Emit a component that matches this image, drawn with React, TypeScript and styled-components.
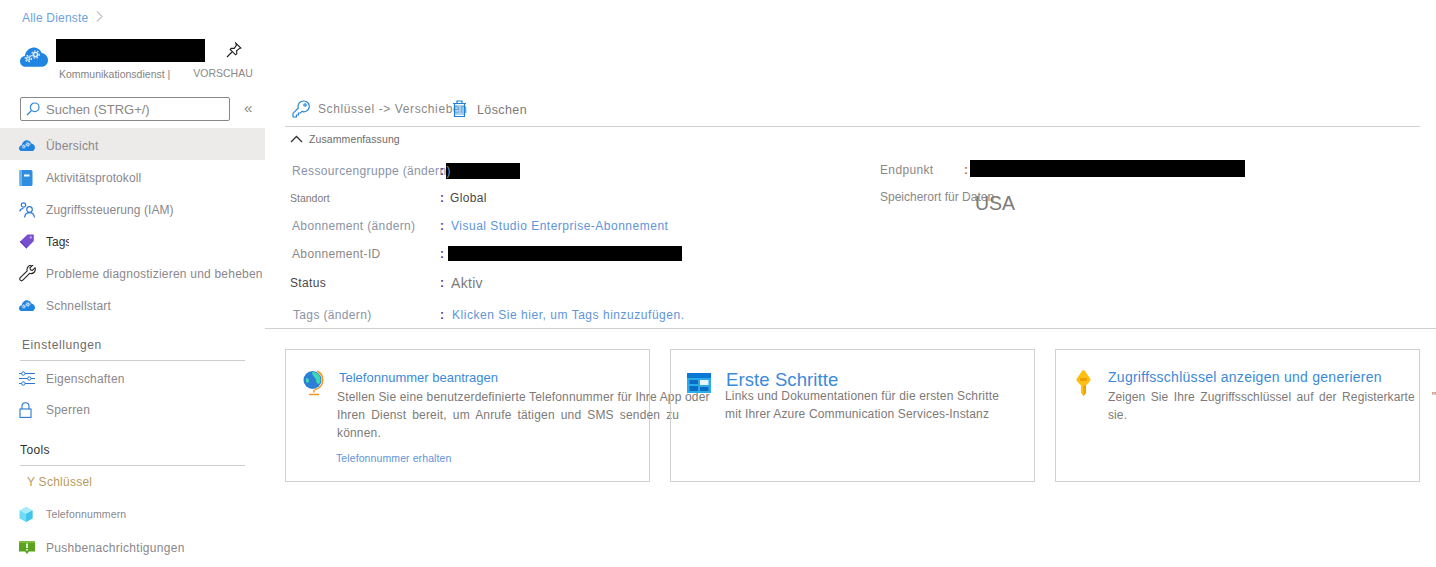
import React from "react";
import styled, { createGlobalStyle } from "styled-components";

const Global = createGlobalStyle`
  html, body { margin: 0; padding: 0; background: #fff; overflow: hidden; }
  body { font-family: "Liberation Sans", Arial, sans-serif; }
  * { box-sizing: border-box; }
`;

const Page = styled.div`
  display: flex;
  width: 1436px;
  height: 567px;
  overflow: hidden;
`;

const Sidebar = styled.aside`
  width: 265px;
  flex: none;
  display: flex;
  flex-direction: column;
`;

const Crumbs = styled.div`
  height: 39px;
  padding: 11px 0 0 22px;
  display: flex;
  align-items: flex-start;
  gap: 8px;
  font-size: 12px;
  line-height: 15px;
  letter-spacing: 0.2px;
  color: #6ba3e0;
`;

const Resource = styled.div`
  height: 58px;
  display: grid;
  grid-template-columns: 36px 149px 21px auto;
  grid-template-rows: 23px 35px;
  padding-left: 20px;
`;

const ResourceIcon = styled.div`
  grid-row: 1 / 3;
  padding-top: 8px;
`;

const Redaction = styled.div<{ $w: number; $h: number; $x?: number; $y?: number }>`
  width: ${(p) => p.$w}px;
  height: ${(p) => p.$h}px;
  margin-left: ${(p) => p.$x ?? 0}px;
  margin-top: ${(p) => p.$y ?? 0}px;
  background: #000;
  flex: none;
`;

const PinSlot = styled.div`
  grid-column: 4;
  padding-top: 3px;
`;

const SubLine = styled.div`
  grid-column: 2 / 5;
  display: flex;
  align-items: flex-start;
  padding: 6px 0 0 3px;
  white-space: nowrap;
  font-size: 10.5px;
  line-height: 13px;
  color: #85827f;
`;

const Preview = styled.span`
  margin-left: 23px;
  margin-top: -1px;
  font-size: 10.5px;
  color: #8a8886;
`;

const SearchRow = styled.div`
  height: 31px;
  padding-left: 20px;
  display: flex;
  align-items: flex-start;
`;

const SearchBox = styled.div`
  width: 210px;
  height: 24px;
  border: 1px solid #8a8886;
  border-radius: 2px;
  display: flex;
  align-items: center;
  padding-left: 5px;
  gap: 6px;
  font-size: 13px;
  color: #8a8886;
`;

const Collapse = styled.span`
  margin-left: 14px;
  font-size: 15px;
  line-height: 22px;
  color: #8a8886;
`;

const NavRow = styled.div<{ $active?: boolean; $h?: number }>`
  height: ${(p) => p.$h ?? 32}px;
  padding-top: 3px;
  display: flex;
  align-items: center;
  background: ${(p) => (p.$active ? "#edebe9" : "transparent")};
  white-space: nowrap;
`;

const NavIcon = styled.span`
  width: 46px;
  padding-left: 19px;
  flex: none;
  display: flex;
  align-items: center;
`;

const NavLabel = styled.span<{ $size?: number; $color?: string; $clip?: number; $spacing?: number }>`
  font-size: ${(p) => p.$size ?? 12}px;
  letter-spacing: ${(p) => p.$spacing ?? 0.2}px;
  color: ${(p) => p.$color ?? "#8a878c"};
  ${(p) => (p.$clip ? `display:inline-block;width:${p.$clip}px;overflow:hidden;` : "")}
`;

const KeyLabel = styled.span`
  padding-left: 27px;
  font-size: 12px;
  letter-spacing: 0.25px;
  color: #b89b5e;
`;

const SectionTitle = styled.div<{ $dark?: boolean; $top: number }>`
  margin: ${(p) => p.$top}px 0 0 ${(p) => (p.$dark ? 20 : 22)}px;
  font-size: 12px;
  line-height: 15px;
  height: 24px;
  letter-spacing: ${(p) => (p.$dark ? 0.4 : 0.6)}px;
  color: ${(p) => (p.$dark ? "#323130" : "#6e6c6a")};
`;

const Rule = styled.div`
  margin-left: 20px;
  width: 225px;
  height: 1px;
  background: #cfcdcb;
  margin-top: -2px;
`;

const Main = styled.main`
  flex: 1;
  min-width: 0;
  padding-top: 97px;
  display: flex;
  flex-direction: column;
`;

const Toolbar = styled.div`
  height: 30px;
  margin-left: 20px;
  width: 1135px;
  border-bottom: 1px solid #d2d0ce;
  display: flex;
  align-items: flex-start;
  padding: 3px 0 0 7px;
  white-space: nowrap;
`;

const ToolText = styled.span`
  font-size: 12px;
  letter-spacing: 0.6px;
  line-height: 15px;
  margin: 2px 0 0 8px;
  color: #8a8886;
  width: 134px;
`;

const DeleteText = styled.span`
  font-size: 12.5px;
  letter-spacing: 0.4px;
  line-height: 15px;
  margin: 3px 0 0 10px;
  color: #7d7a78;
`;

const Summary = styled.div`
  height: 20px;
  padding: 4px 0 0 25px;
  display: flex;
  align-items: center;
  gap: 6px;
  font-size: 10.5px;
  line-height: 13px;
  letter-spacing: 0.1px;
  color: #6e6c6a;
`;

const Facts = styled.div`
  height: 182px;
  padding-top: 6px;
  border-bottom: 1px solid #d2d0ce;
  display: grid;
  grid-template-columns: 615px 1fr;
`;

const FactCol = styled.div`
  display: flex;
  flex-direction: column;
`;

const FactRow = styled.div<{ $h: number; $cols?: number; $pad?: number; $colon?: number }>`
  height: ${(p) => p.$h}px;
  display: grid;
  grid-template-columns: ${(p) => p.$cols ?? 150}px ${(p) => p.$colon ?? 8}px 1fr;
  align-items: center;
  padding-left: ${(p) => p.$pad ?? 25}px;
  white-space: nowrap;
`;

const FactLabel = styled.span<{ $tone?: string; $small?: boolean }>`
  position: relative;
  z-index: 1;
  font-size: ${(p) => (p.$small ? 10.5 : 12)}px;
  letter-spacing: ${(p) => (p.$small ? 0 : 0.35)}px;
  color: ${(p) => p.$tone ?? "#8a93a6"};
`;

const WideLabel = styled.span`
  align-self: start;
  margin-top: 2px;
  font-size: 12px;
  line-height: 16px;
  color: #8a8886;
`;

const Colon = styled.span<{ $color?: string }>`
  position: relative;
  z-index: 1;
  font-size: 12px;
  font-weight: 700;
  color: ${(p) => p.$color ?? "#6b3a8e"};
`;

const FactValue = styled.span<{ $link?: boolean; $x?: number; $size?: number; $tone?: string; $spacing?: number }>`
  font-size: ${(p) => p.$size ?? 12}px;
  letter-spacing: ${(p) => p.$spacing ?? 0.3}px;
  margin-left: ${(p) => p.$x ?? 0}px;
  color: ${(p) => (p.$link ? "#5e94da" : p.$tone ?? "#4a4846")};
`;

const UsaValue = styled.span`
  align-self: start;
  font-size: 19.5px;
  line-height: 23px;
  margin-left: 1px;
  margin-top: 5px;
  color: #7d7a78;
`;

const Cards = styled.div`
  margin: 20px 0 0 20px;
  display: grid;
  grid-template-columns: repeat(3, 365px);
  column-gap: 20px;
`;

const Card = styled.section`
  height: 133px;
  border: 1px solid #d2d0ce;
  display: flex;
  white-space: nowrap;
`;

const CardIcon = styled.div<{ $w: number; $left: number; $y: number }>`
  flex: none;
  width: ${(p) => p.$w}px;
  padding: ${(p) => p.$y}px 0 0 ${(p) => p.$left}px;
`;

const CardBody = styled.div<{ $top: number }>`
  padding-top: ${(p) => p.$top}px;
`;

const CardTitle = styled.div<{ $size?: number; $lh?: number; $spacing?: number }>`
  font-size: ${(p) => p.$size ?? 13}px;
  line-height: ${(p) => p.$lh ?? 16}px;
  letter-spacing: ${(p) => p.$spacing ?? 0}px;
  color: #3b8ad9;
`;

const CardText = styled.div<{ $x?: number; $top?: number; $lh?: number; $size?: number; $spacing?: number }>`
  margin: ${(p) => p.$top ?? 0}px 0 0 ${(p) => p.$x ?? 0}px;
  font-size: ${(p) => p.$size ?? 12}px;
  line-height: ${(p) => p.$lh ?? 18}px;
  letter-spacing: ${(p) => p.$spacing ?? 0.3}px;
  color: #7d7a78;
`;

const WideLine = styled.span<{ $word: number }>`
  word-spacing: ${(p) => p.$word}px;
`;

const ClippedTail = styled.span`
  margin-left: 17px;
`;

const CardLink = styled.div`
  margin: 9px 0 0 -3px;
  font-size: 10.5px;
  line-height: 14px;
  letter-spacing: 0.1px;
  color: #5e94da;
`;

const CloudGears = ({ s = 28 }: { s?: number }) => {
  const gear = (cx: number, cy: number, r: number) => (
    <g>
      <circle cx={cx} cy={cy} r={r + 0.9} fill="none" stroke="#eaf3fb" strokeWidth="1.200" strokeDasharray="1.600 1.500" />
      <circle cx={cx} cy={cy} r={r} fill="#eaf3fb" />
      <circle cx={cx} cy={cy} r={r * 0.5} fill="#3f8fdc" />
    </g>
  );
  return (
    <svg width={s} height={(s * 20) / 28} viewBox="0 0 28 20">
      <path d="M6 19.800C2.500 19.800 0 17.400 0 14.400 0 11.500 2 9.300 4.800 9 5.400 4.200 9.200.5 13.800.5c3.600 0 6.700 2.300 7.900 5.600 3.500.5 6.300 3.600 6.300 7.100 0 3.700-2.900 6.600-6.400 6.600z" fill="#1f84e2" />
      {gear(15.500, 7.500, 2.800)}
      {gear(8.300, 11.500, 2.200)}
    </svg>
  );
};

const Pin = () => (
  <svg width="16" height="16" viewBox="0 0 16 16" fill="none" stroke="#1f1e1d" strokeWidth="1.100">
    <path d="M9.800 1.200l5 4.800-1.200.4-3 2.400.2 3-1.200 1L4.200 7.400l1-1.100 3 .1 2.200-3.100z" />
    <path d="M6 10L1 15" />
  </svg>
);

const SearchGlass = () => (
  <svg width="14" height="14" viewBox="0 0 14 14" fill="none" stroke="#2b88d8" strokeWidth="1.200">
    <circle cx="8.700" cy="5.300" r="4.300" />
    <path d="M5.500 8.500L1 13" />
  </svg>
);

const Book = () => (
  <svg width="14" height="16" viewBox="0 0 14 16">
    <rect x="0.500" y="0" width="13" height="16" rx="1.500" fill="#2f8ee0" />
    <rect x="0.500" y="0" width="2.500" height="16" fill="#69b4ee" />
    <rect x="5" y="4.500" width="5.500" height="2" fill="#fff" />
  </svg>
);

const People = () => (
  <svg width="18" height="16" viewBox="0 0 18 16" fill="none" stroke="#2a76d2" strokeWidth="1.200">
    <circle cx="4.500" cy="3" r="2.200" />
    <path d="M0.700 9.500c.4-2 2-3 3.800-3" />
    <circle cx="10.500" cy="7.500" r="2.800" />
    <path d="M5.500 15.500c.4-3 2.500-4.800 5-4.800s4.600 1.800 5 4.800" />
  </svg>
);

const Tag = () => (
  <svg width="15" height="15" viewBox="0 0 15 15">
    <path d="M8.500 0.500H14a.8.800 0 0 1 .8.800V7L7.500 14.500.8 7.800z" fill="#7a4fcf" />
    <path d="M0.800 7.800L7.500 14.500 8 14 1.500 7z" fill="#5f3ab0" />
    <circle cx="11.800" cy="3.400" r="1.100" fill="#c9b5f0" />
  </svg>
);

const Wrench = () => (
  <svg width="17" height="17" viewBox="0 0 17 17" fill="none" stroke="#252423" strokeWidth="1.100">
    <path d="M16 2.800l-2.600 2.500-2-.5-.5-2L13.500.5a4.200 4.200 0 0 0-5.300 5.300L1.300 12.700a1.900 1.900 0 0 0 0 2.500c.7.700 1.800.7 2.500 0l6.900-6.900A4.200 4.200 0 0 0 16 2.800z" />
  </svg>
);

const Sliders = () => (
  <svg width="16" height="15" viewBox="0 0 16 15" fill="none" stroke="#2a76d2" strokeWidth="1">
    <path d="M0 2.500h2.500M6 2.500h10M0 7.500h8.500M12 7.500h4M0 12.500h2.500M6 12.500h10" />
    <circle cx="4.300" cy="2.500" r="1.700" />
    <circle cx="10.300" cy="7.500" r="1.700" />
    <circle cx="4.300" cy="12.500" r="1.700" />
  </svg>
);

const Lock = () => (
  <svg width="13" height="16" viewBox="0 0 13 16" fill="none" stroke="#2a76d2" strokeWidth="1.100">
    <rect x="1" y="7" width="11" height="8.400" />
    <path d="M3 7V4.200a3.500 3.500 0 0 1 7 0V7" />
  </svg>
);

const Cube = () => (
  <svg width="14" height="15" viewBox="0 0 14 15">
    <path d="M7 0l6.500 3.500v8L7 15 .5 11.500v-8z" fill="#6fdcf5" />
    <path d="M.5 3.500L7 7l6.500-3.500L7 0z" fill="#a8ecfa" />
    <path d="M7 7v8l6.500-3.500v-8z" fill="#42c4ea" />
  </svg>
);

const Notify = () => (
  <svg width="16" height="15" viewBox="0 0 16 15">
    <path d="M0 0h16v10.500h-6L8 13l-2-2.500H0z" fill="#5ba31e" />
    <rect y="0" width="16" height="2" fill="#7cbe3c" />
    <rect x="7.200" y="2.500" width="1.600" height="4.500" fill="#fff" />
    <rect x="7.200" y="8" width="1.600" height="1.500" fill="#fff" />
  </svg>
);

const KeyOutline = () => (
  <svg width="18" height="18" viewBox="0 0 18 18" fill="none" stroke="#2b88d8" strokeWidth="1.200">
    <path d="M11.500 1a5.400 5.400 0 0 0-5.200 7L1 13.400V17h3.400v-2h2v-2h2l1.500-1.600A5.400 5.400 0 1 0 11.500 1z" />
    <circle cx="13" cy="5" r="1.200" />
  </svg>
);

const Trash = () => (
  <svg width="15" height="17" viewBox="0 0 15 17">
    <rect x="3" y="5" width="9" height="10" fill="#6bb2ea" fillOpacity="0.6" />
    <path d="M1 3.500h13M5 3.500V1h5v2.500M2.500 3.500v13h10v-13" fill="none" stroke="#1f7fd6" strokeWidth="1.200" />
  </svg>
);

const Chevron = () => (
  <svg width="13" height="8" viewBox="0 0 13 8" fill="none" stroke="#323130" strokeWidth="1.300">
    <path d="M1 7l5.500-5.500L12 7" />
  </svg>
);

const ChevronRight = () => (
  <svg width="7" height="11" viewBox="0 0 7 11" fill="none" stroke="#8a8886" strokeWidth="0.900">
    <path d="M1 .5l5 5-5 5" />
  </svg>
);

const Globe = () => (
  <svg width="22" height="26" viewBox="0 0 22 26">
    <circle cx="9.500" cy="10" r="9" fill="#2c7fd6" />
    <path d="M9 2c3 0 5 1 7 3 2 3 2 7 0 9-2 0-3-2-3-4S9 6 9 2zM3 8c2 0 3 1 3 3s-1 2-3 1z" fill="#3fd8b4" />
    <path d="M14 1c5 2 7 8 5 13-1.500 3-4 5-7.500 5.500" fill="none" stroke="#f7941d" strokeWidth="1.500" />
    <path d="M11 20v2.500M6 24.500h10" stroke="#f7941d" strokeWidth="1.500" />
  </svg>
);

const Dashboard = () => (
  <svg width="24" height="20" viewBox="0 0 24 20">
    <rect width="24" height="20" fill="#2dabe8" />
    <rect width="24" height="5" fill="#0a78d4" />
    <rect x="2.500" y="7" width="8.500" height="4" fill="#0a6cc4" />
    <rect x="13" y="7" width="8.500" height="5" fill="#e8f6ff" />
    <rect x="2.500" y="13" width="8.500" height="5" fill="#0a6cc4" />
    <rect x="13" y="14" width="8.500" height="4" fill="#0a6cc4" />
  </svg>
);

const GoldKey = () => (
  <svg width="17" height="26" viewBox="0 0 17 26">
    <path d="M8.500 0c1 0 1.500 1 2 1.800l4.500 6.400c.8 1.200.8 2 0 3.100L11 15.500V23l-2.500 3L6 23v-7.500l-4-4.200c-.8-1.100-.8-1.900 0-3.100l4.500-6.400C7 1 7.500 0 8.500 0z" fill="#fdc013" />
    <rect x="5" y="8" width="7" height="3" fill="#eda000" />
    <path d="M8.500 15.500H11V23l-2.500 3z" fill="#eda000" />
  </svg>
);

export default function App() {
  return (
    <Page>
      <Global />
      <Sidebar>
        <Crumbs>
          Alle Dienste <ChevronRight />
        </Crumbs>
        <Resource>
          <ResourceIcon>
            <CloudGears />
          </ResourceIcon>
          <Redaction $w={149} $h={23} />
          <span />
          <PinSlot>
            <Pin />
          </PinSlot>
          <SubLine>
            Kommunikationsdienst |<Preview>VORSCHAU</Preview>
          </SubLine>
        </Resource>
        <SearchRow>
          <SearchBox>
            <SearchGlass />
            Suchen (STRG+/)
          </SearchBox>
          <Collapse>«</Collapse>
        </SearchRow>
        <NavRow $active>
          <NavIcon><CloudGears s={16} /></NavIcon>
          <NavLabel>Übersicht</NavLabel>
        </NavRow>
        <NavRow>
          <NavIcon><Book /></NavIcon>
          <NavLabel $spacing={0.1}>Aktivitätsprotokoll</NavLabel>
        </NavRow>
        <NavRow>
          <NavIcon><People /></NavIcon>
          <NavLabel $spacing={0.08}>Zugriffssteuerung (IAM)</NavLabel>
        </NavRow>
        <NavRow>
          <NavIcon><Tag /></NavIcon>
          <NavLabel $color="#323130" $clip={23} $spacing={0}>Tags</NavLabel>
        </NavRow>
        <NavRow>
          <NavIcon><Wrench /></NavIcon>
          <NavLabel $spacing={0.22}>Probleme diagnostizieren und beheben</NavLabel>
        </NavRow>
        <NavRow>
          <NavIcon><CloudGears s={16} /></NavIcon>
          <NavLabel>Schnellstart</NavLabel>
        </NavRow>
        <SectionTitle $top={18}>Einstellungen</SectionTitle>
        <Rule />
        <NavRow>
          <NavIcon><Sliders /></NavIcon>
          <NavLabel>Eigenschaften</NavLabel>
        </NavRow>
        <NavRow $h={30}>
          <NavIcon><Lock /></NavIcon>
          <NavLabel>Sperren</NavLabel>
        </NavRow>
        <SectionTitle $top={20} $dark>Tools</SectionTitle>
        <Rule />
        <NavRow $h={29}>
          <KeyLabel>Y Schlüssel</KeyLabel>
        </NavRow>
        <NavRow $h={35}>
          <NavIcon><Cube /></NavIcon>
          <NavLabel $size={10.5} $spacing={0.15}>Telefonnummern</NavLabel>
        </NavRow>
        <NavRow $h={33}>
          <NavIcon><Notify /></NavIcon>
          <NavLabel $spacing={0.3}>Pushbenachrichtigungen</NavLabel>
        </NavRow>
      </Sidebar>
      <Main>
        <Toolbar>
          <KeyOutline />
          <ToolText>Schlüssel -&gt; Verschieben</ToolText>
          <Trash />
          <DeleteText>Löschen</DeleteText>
        </Toolbar>
        <Summary>
          <Chevron />
          Zusammenfassung
        </Summary>
        <Facts>
          <FactCol>
            <FactRow $h={35} $pad={27} $cols={148}>
              <FactLabel>Ressourcengruppe (ändern)</FactLabel>
              <Colon>:</Colon>
              <Redaction $w={74} $h={16} $x={-2} />
            </FactRow>
            <FactRow $h={20}>
              <FactLabel $tone="#7d7a78" $small>Standort</FactLabel>
              <Colon>:</Colon>
              <FactValue $x={2} $spacing={0.35}>Global</FactValue>
            </FactRow>
            <FactRow $h={36} $pad={27} $cols={148}>
              <FactLabel>Abonnement (ändern)</FactLabel>
              <Colon>:</Colon>
              <FactValue $link $x={3} $spacing={0.5}>Visual Studio Enterprise-Abonnement</FactValue>
            </FactRow>
            <FactRow $h={19} $pad={27} $cols={148}>
              <FactLabel $tone="#8a8886">Abonnement-ID</FactLabel>
              <Colon>:</Colon>
              <Redaction $w={234} $h={15} />
            </FactRow>
            <FactRow $h={39}>
              <FactLabel $tone="#4a4846">Status</FactLabel>
              <Colon>:</Colon>
              <FactValue $size={14} $x={3} $tone="#7d7a78">Aktiv</FactValue>
            </FactRow>
            <FactRow $h={26} $pad={28} $cols={147}>
              <FactLabel>Tags (ändern)</FactLabel>
              <Colon>:</Colon>
              <FactValue $link $x={4} $spacing={0.53}>Klicken Sie hier, um Tags hinzuzufügen.</FactValue>
            </FactRow>
          </FactCol>
          <FactCol>
            <FactRow $h={34} $cols={84} $colon={6} $pad={0}>
              <FactLabel $tone="#8a8886">Endpunkt</FactLabel>
              <Colon $color="#c77a1d">:</Colon>
              <Redaction $w={275} $h={17} $y={-3} />
            </FactRow>
            <FactRow $h={16} $cols={84} $colon={10} $pad={0}>
              <WideLabel>Speicherort für Daten</WideLabel>
              <span />
              <UsaValue>USA</UsaValue>
            </FactRow>
          </FactCol>
        </Facts>
        <Cards>
          <Card>
            <CardIcon $w={53} $left={17} $y={20}><Globe /></CardIcon>
            <CardBody $top={20}>
              <CardTitle>Telefonnummer beantragen</CardTitle>
              <CardText $x={-2} $top={2} $spacing={0.17}>
                Stellen Sie eine benutzerdefinierte Telefonnummer für Ihre App oder<br />
                <WideLine $word={2.5}>Ihren Dienst bereit, um Anrufe tätigen und SMS senden zu</WideLine><br />
                können.
              </CardText>
              <CardLink>Telefonnummer erhalten</CardLink>
            </CardBody>
          </Card>
          <Card>
            <CardIcon $w={55} $left={16} $y={23}><Dashboard /></CardIcon>
            <CardBody $top={23}>
              <CardTitle $size={18.5} $lh={14} $spacing={0.1}>Erste Schritte</CardTitle>
              <CardText $x={-1} $spacing={0.16}>
                Links und Dokumentationen für die ersten Schritte<br />
                mit Ihrer Azure Communication Services-Instanz
              </CardText>
            </CardBody>
          </Card>
          <Card>
            <CardIcon $w={52} $left={19} $y={20}><GoldKey /></CardIcon>
            <CardBody $top={19}>
              <CardTitle $size={14} $spacing={0.27}>Zugriffsschlüssel anzeigen und generieren</CardTitle>
              <CardText $top={3} $spacing={0.1}>
                <WideLine $word={2}>Zeigen Sie Ihre Zugriffsschlüssel auf der Registerkarte</WideLine>
                <ClippedTail>"Schlüssel" an oder generieren</ClippedTail><br />
                sie.
              </CardText>
            </CardBody>
          </Card>
        </Cards>
      </Main>
    </Page>
  );
}
